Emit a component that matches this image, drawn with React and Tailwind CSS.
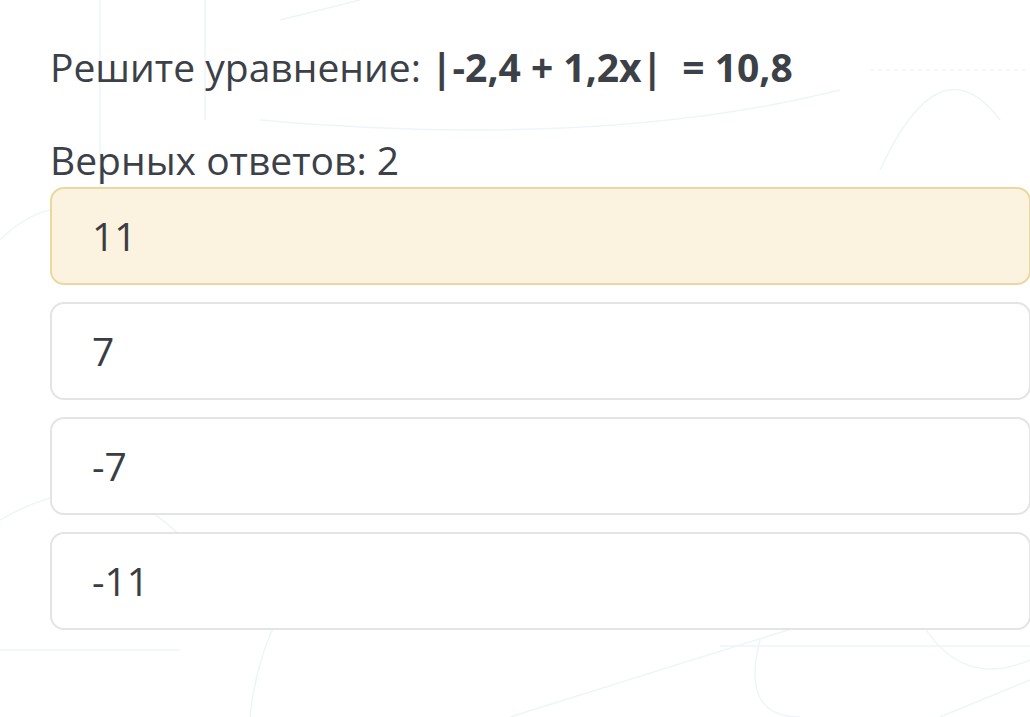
export default function App() {
  const answers = ["11", "7", "-7", "-11"];
  return (
    <div
      className="relative w-[1030px] h-[717px] overflow-hidden bg-white"
      style={{ fontFamily: '"Open Sans", "Noto Sans", sans-serif' }}
    >
      <svg className="absolute inset-0 pointer-events-none" width="1030" height="717" viewBox="0 0 1030 717" fill="none" stroke="#eef5f8" strokeWidth="1.5">
        <path d="M100 0 V200" />
        <path d="M205 0 V120" />
        <path d="M280 20 L360 0" />
        <path d="M260 120 Q600 150 840 90" />
        <path d="M880 170 Q940 40 1000 120" />
        <path d="M870 70 H1030" strokeDasharray="4 4" />
        <path d="M0 240 Q60 180 140 230" />
        <path d="M0 520 Q120 450 200 560" />
        <path d="M0 650 H180" />
        <path d="M250 717 Q260 620 320 560" />
        <path d="M510 717 L820 620" />
        <path d="M760 640 Q740 717 800 717" />
        <path d="M920 620 Q960 690 1030 660" />
        <path d="M720 646 H1030" />
        <path d="M940 717 L1030 680" />
      </svg>

      <div className="relative flex flex-col pl-[50px] pt-[40px]">
        <h1 className="text-[39px] leading-[54px] text-[#3c4047] font-normal whitespace-nowrap">
          Решите уравнение:{" "}
          <span className="font-bold">
            |-2,4 + 1,2x| <span className="ml-[9px]">= 10,8</span>
          </span>
        </h1>
        <p className="mt-[39px] text-[39px] leading-[54px] text-[#3c4047]">Верных ответов: 2</p>
        <div className="flex flex-col gap-[17px] w-[981px]">
          {answers.map((a, i) => (
            <div
              key={a}
              className={
                "h-[98px] rounded-[14px] border-2 flex items-center pl-[40px] text-[39px] text-[#3a3d42] " +
                (i === 0 ? "bg-[#fbf2df] border-[#ead8a0]" : "bg-white border-[#e4e4e4]")
              }
            >
              {a}
            </div>
          ))}
        </div>
      </div>
    </div>
  );
}
